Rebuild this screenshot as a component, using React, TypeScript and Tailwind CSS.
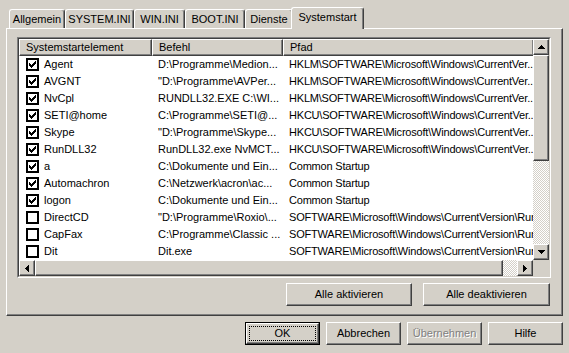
import React from 'react';

const raised =
  'border border-t-white border-l-white border-r-[#404040] border-b-[#404040] shadow-[inset_-1px_-1px_#808080]';
const checker =
  'bg-[image:repeating-conic-gradient(#ffffff_0%_25%,#d4d0c8_0%_50%)] bg-[length:2px_2px]';

interface Row {
  name: string;
  command: string;
  path: string;
  checked: boolean;
}

const HKLM = 'HKLM\\SOFTWARE\\Microsoft\\Windows\\CurrentVer...';
const HKCU = 'HKCU\\SOFTWARE\\Microsoft\\Windows\\CurrentVer...';
const RUN = 'SOFTWARE\\Microsoft\\Windows\\CurrentVersion\\Run';

const rows: Row[] = [
  { name: 'Agent', command: 'D:\\Programme\\Medion...', path: HKLM, checked: true },
  { name: 'AVGNT', command: '"D:\\Programme\\AVPer...', path: HKLM, checked: true },
  { name: 'NvCpl', command: 'RUNDLL32.EXE C:\\WI...', path: HKLM, checked: true },
  { name: 'SETI@home', command: 'C:\\Programme\\SETI@...', path: HKCU, checked: true },
  { name: 'Skype', command: '"D:\\Programme\\Skype...', path: HKCU, checked: true },
  { name: 'RunDLL32', command: 'RunDLL32.exe NvMCT...', path: HKCU, checked: true },
  { name: 'a', command: 'C:\\Dokumente und Ein...', path: 'Common Startup', checked: true },
  { name: 'Automachron', command: 'C:\\Netzwerk\\acron\\ac...', path: 'Common Startup', checked: true },
  { name: 'logon', command: 'C:\\Dokumente und Ein...', path: 'Common Startup', checked: true },
  { name: 'DirectCD', command: '"D:\\Programme\\Roxio\\...', path: RUN, checked: false },
  { name: 'CapFax', command: 'C:\\Programme\\Classic ...', path: RUN, checked: false },
  { name: 'Dit', command: 'Dit.exe', path: RUN, checked: false },
];

const tabs = [
  { label: 'Allgemein', w: 'w-[56px]' },
  { label: 'SYSTEM.INI', w: 'w-[69px]' },
  { label: 'WIN.INI', w: 'w-[51px]' },
  { label: 'BOOT.INI', w: 'w-[60px]' },
  { label: 'Dienste', w: 'w-[48px]' },
];

function Check({ checked }: { checked: boolean }) {
  return (
    <div className="w-[13px] h-[13px] shrink-0 border-2 border-black bg-white flex items-center justify-center">
      {checked && (
        <svg width="7" height="7" viewBox="0 0 7 7" shapeRendering="crispEdges">
          <path
            fill="#000"
            d="M6 0h1v1h-1z M5 1h2v1h-2z M0 2h1v1h-1z M4 2h3v1h-3z M0 3h2v1h-2z M3 3h3v1h-3z M0 4h5v1h-5z M1 5h3v1h-3z M2 6h1v1h-1z"
          />
        </svg>
      )}
    </div>
  );
}

function Arrow({ dir }: { dir: 'up' | 'down' | 'left' | 'right' }) {
  const vertical = dir === 'up' || dir === 'down';
  const d = {
    up: 'M3 0h1v1h-1z M2 1h3v1h-3z M1 2h5v1h-5z M0 3h7v1h-7z',
    down: 'M0 0h7v1h-7z M1 1h5v1h-5z M2 2h3v1h-3z M3 3h1v1h-1z',
    left: 'M3 0h1v7h-1z M2 1h1v5h-1z M1 2h1v3h-1z M0 3h1v1h-1z',
    right: 'M0 0h1v7h-1z M1 1h1v5h-1z M2 2h1v3h-1z M3 3h1v1h-1z',
  }[dir];
  return (
    <div className={`w-[16px] h-[16px] shrink-0 ${raised} bg-[#d4d0c8] flex items-center justify-center`}>
      <svg
        width={vertical ? 7 : 4}
        height={vertical ? 4 : 7}
        viewBox={vertical ? '0 0 7 4' : '0 0 4 7'}
        shapeRendering="crispEdges"
      >
        <path fill="#000" d={d} />
      </svg>
    </div>
  );
}

function Button({
  children,
  isDefault,
  disabled,
  width,
}: {
  children: React.ReactNode;
  isDefault?: boolean;
  disabled?: boolean;
  width: string;
}) {
  const label = (
    <span className={disabled ? 'text-[#808080] [text-shadow:1px_1px_#ffffff]' : 'text-black'}>{children}</span>
  );
  if (isDefault) {
    return (
      <div className={`${width} h-[23px] border border-black flex`}>
        <div className={`flex-1 ${raised} flex p-[2px]`}>
          <div className="flex-1 border border-dotted border-black flex items-center justify-center">{label}</div>
        </div>
      </div>
    );
  }
  return <div className={`${width} h-[23px] ${raised} flex items-center justify-center`}>{label}</div>;
}

export default function App() {
  return (
    <div className="w-[569px] h-[353px] bg-[#d4d0c8] flex flex-col px-[6px] text-[11px] leading-none text-black font-['Liberation_Sans',Arial,sans-serif] select-none">
      {/* tab strip */}
      <div className="h-[28px] flex items-end pl-[3px]">
        {tabs.map((t) => (
          <div
            key={t.label}
            className={`${t.w} h-[19px] border-t border-l border-white border-r border-r-[#404040] shadow-[inset_-1px_0_#808080] rounded-t-[3px] flex items-center justify-center`}
          >
            {t.label}
          </div>
        ))}
        <div className="relative z-10 w-[73px] h-[22px] -mb-px -ml-[2px] bg-[#d4d0c8] border-t border-l border-white border-r border-r-[#404040] shadow-[inset_-1px_0_#808080] rounded-t-[3px] flex items-center justify-center pb-[2px]">
          Systemstart
        </div>
      </div>

      {/* tab panel */}
      <div className="h-[288px] border-t border-l border-white border-r border-b border-r-[#404040] border-b-[#404040] shadow-[inset_-1px_-1px_#808080] pt-[8px] pl-[10px] pr-[11px] flex flex-col">
        {/* list view */}
        <div className="h-[241px] border border-t-[#808080] border-l-[#808080] border-r-white border-b-white">
          <div className="h-full border border-t-[#404040] border-l-[#404040] border-r-[#d4d0c8] border-b-[#d4d0c8] flex flex-col">
            <div className="flex flex-1 min-h-0">
              <div className="flex-1 min-w-0 bg-white flex flex-col overflow-hidden">
                <div className="h-[17px] flex shrink-0 bg-[#d4d0c8]">
                  <div className={`w-[133px] shrink-0 ${raised} flex items-center pl-[6px]`}>Systemstartelement</div>
                  <div className={`w-[131px] shrink-0 ${raised} flex items-center pl-[6px]`}>Befehl</div>
                  <div className={`flex-1 ${raised} border-r-0 flex items-center pl-[6px]`}>Pfad</div>
                </div>
                {rows.map((r) => (
                  <div key={r.name} className="h-[17px] flex items-center shrink-0 whitespace-nowrap">
                    <div className="w-[133px] shrink-0 flex items-center pl-[7px] gap-[5px] overflow-hidden">
                      <Check checked={r.checked} />
                      <span>{r.name}</span>
                    </div>
                    <div className="w-[131px] shrink-0 pl-[6px] overflow-hidden">{r.command}</div>
                    <div className="flex-1 pl-[6px] overflow-hidden tracking-[-0.2px]">{r.path}</div>
                  </div>
                ))}
              </div>
              {/* vertical scrollbar */}
              <div className="w-[16px] flex flex-col">
                <Arrow dir="up" />
                <div className={`h-[106px] shrink-0 ${raised} bg-[#d4d0c8]`} />
                <div className={`flex-1 ${checker}`} />
                <Arrow dir="down" />
              </div>
            </div>
            {/* horizontal scrollbar */}
            <div className="h-[16px] flex shrink-0">
              <Arrow dir="left" />
              <div className={`w-[468px] shrink-0 ${raised} bg-[#d4d0c8]`} />
              <div className={`flex-1 ${checker}`} />
              <Arrow dir="right" />
              <div className="w-[16px] bg-[#d4d0c8]" />
            </div>
          </div>
        </div>

        <div className="mt-[5px] flex justify-end gap-[11px] pr-[1px]">
          <Button width="w-[126px]">Alle aktivieren</Button>
          <Button width="w-[127px]">Alle deaktivieren</Button>
        </div>
      </div>

      {/* dialog buttons */}
      <div className="mt-[6px] flex justify-end gap-[6px]">
        <Button width="w-[75px]" isDefault>
          OK
        </Button>
        <Button width="w-[75px]">Abbrechen</Button>
        <Button width="w-[75px]" disabled>
          Übernehmen
        </Button>
        <Button width="w-[75px]">Hilfe</Button>
      </div>
    </div>
  );
}
